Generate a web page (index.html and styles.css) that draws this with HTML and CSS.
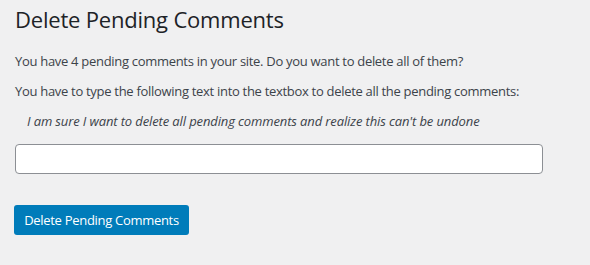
FILE: index.html
```html
<!DOCTYPE html>
<html>
<head>
<meta charset="utf-8">
<link rel="stylesheet" href="styles.css">
</head>
<body>
<div class="wrap">
  <h1 class="title">Delete Pending Comments</h1>
  <p class="text">You have 4 pending comments in your site. Do you want to delete all of them?</p>
  <p class="text">You have to type the following text into the textbox to delete all the pending comments:</p>
  <p class="text confirm">I am sure I want to delete all pending comments and realize this can't be undone</p>
  <input class="field" type="text">
  <div class="actions"><button class="button">Delete Pending Comments</button></div>
</div>
</body>
</html>
```

FILE: styles.css
```css
html, body {
  margin: 0;
  padding: 0;
  background: #f0f0f1;
}
body {
  font-family: "Open Sans", "Noto Sans", sans-serif;
  color: #3c434a;
  font-size: 13px;
}
.wrap {
  padding: 0 15px;
}
.title {
  margin: 0;
  padding-top: 5px;
  font-size: 22px;
  font-weight: 400;
  line-height: 29px;
  color: #1d2327;
  letter-spacing: -0.2px;
}
.text {
  margin: 17px 0 0;
  line-height: 13px;
  letter-spacing: -0.3px;
}
.title + .text {
  margin-top: 21px;
}
.confirm {
  font-style: italic;
  padding-left: 12px;
  letter-spacing: -0.12px;
}
.field {
  display: block;
  box-sizing: border-box;
  margin-top: 16px;
  width: 528px;
  height: 30px;
  border: 1px solid #8c8f94;
  border-radius: 4px;
  background: #fff;
}
.actions {
  margin-top: 31px;
}
.button {
  box-sizing: border-box;
  height: 30px;
  width: 175px;
  margin-left: -1px;
  border: 0;
  border-radius: 3px;
  background: #007cba;
  color: #fff;
  font-family: inherit;
  font-size: 13px;
  letter-spacing: -0.3px;
  padding: 0 10px;
}
```
